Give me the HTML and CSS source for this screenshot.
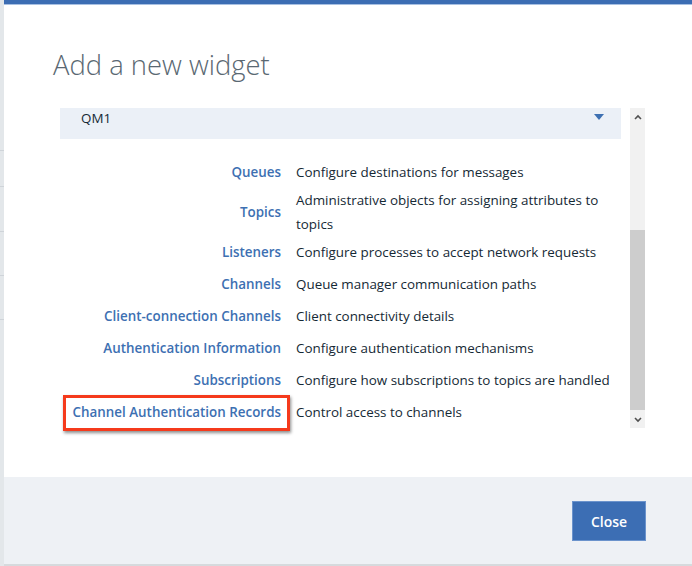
FILE: index.html
```html
<!DOCTYPE html>
<html>
<head>
<meta charset="utf-8">
<link rel="stylesheet" href="styles.css">
</head>
<body>
<div class="page">
  <div class="side">
    <div class="side-line l1"></div>
    <div class="side-line l2"></div>
    <div class="side-line l3"></div>
    <div class="side-line l4"></div>
    <div class="side-line l5"></div>
  </div>
  <div class="dialog">
    <div class="main">
      <h1 class="title">Add a new widget</h1>
      <div class="scroller">
        <div class="content">
          <div class="select">
            <span class="select-value">QM1</span>
            <svg class="caret" width="10" height="6" viewBox="0 0 10 6"><path d="M0 0 L10 0 L5 6 Z" fill="#3d70b2"/></svg>
          </div>
          <div class="rows">
            <div class="row"><div class="label">Queues</div><div class="desc">Configure destinations for messages</div></div>
            <div class="row"><div class="label">Topics</div><div class="desc">Administrative objects for assigning attributes to topics</div></div>
            <div class="row"><div class="label">Listeners</div><div class="desc">Configure processes to accept network requests</div></div>
            <div class="row"><div class="label">Channels</div><div class="desc">Queue manager communication paths</div></div>
            <div class="row"><div class="label">Client-connection Channels</div><div class="desc">Client connectivity details</div></div>
            <div class="row"><div class="label">Authentication Information</div><div class="desc">Configure authentication mechanisms</div></div>
            <div class="row"><div class="label">Subscriptions</div><div class="desc">Configure how subscriptions to topics are handled</div></div>
            <div class="row"><div class="label"><span class="highlight">Channel Authentication Records</span></div><div class="desc">Control access to channels</div></div>
          </div>
        </div>
        <div class="scrollbar">
          <div class="sb-arrow">
            <svg width="8" height="6" viewBox="0 0 8 6"><path d="M1 5 L4 2 L7 5" fill="none" stroke="#505050" stroke-width="1.6"/></svg>
          </div>
          <div class="sb-track">
            <div class="sb-thumb"></div>
          </div>
          <div class="sb-arrow">
            <svg width="8" height="6" viewBox="0 0 8 6"><path d="M1 1 L4 4 L7 1" fill="none" stroke="#505050" stroke-width="1.6"/></svg>
          </div>
        </div>
      </div>
    </div>
    <div class="footer">
      <button class="btn">Close</button>
    </div>
  </div>
</div>
</body>
</html>
```

FILE: styles.css
```css
* { box-sizing: border-box; }
html, body { margin: 0; padding: 0; }
body {
  width: 692px;
  height: 566px;
  overflow: hidden;
  background: #e6e9ec;
  font-family: "Open Sans", "Noto Sans", sans-serif;
}
.page {
  display: flex;
  height: 566px;
}
.side {
  width: 4px;
  flex: none;
  background: #e3e7ea;
  position: relative;
}
.side-line {
  position: absolute;
  left: 0;
  width: 4px;
  height: 1px;
  background: #cfd4d9;
}
.l1 { top: 150px; }
.l2 { top: 186px; }
.l3 { top: 231px; }
.l4 { top: 275px; }
.l5 { top: 319px; }
.dialog {
  flex: 1;
  display: flex;
  flex-direction: column;
  background: #ffffff;
  border-top: 4px solid #3c6db3;
  box-shadow: inset 0 1px 0 #a8c0e2;
  height: 566px;
}
.main {
  height: 473px;
  flex: none;
  padding: 0 0 0 49px;
}
.title {
  margin: 0;
  padding-top: 41px;
  height: 104px;
  font-weight: 300;
  font-size: 27.4px;
  line-height: 40px;
  color: #5a6872;
}
.scroller {
  display: flex;
  gap: 9px;
  padding-left: 7px;
}
.content {
  width: 561px;
}
.select {
  height: 31px;
  background: #ebf0f7;
  display: flex;
  justify-content: space-between;
  padding: 0 17px 0 21px;
}
.select-value {
  line-height: 20px;
  font-size: 13.4px;
  color: #152935;
}
.caret {
  margin-top: 6px;
}
.rows {
  padding-top: 17px;
}
.row {
  display: flex;
  align-items: center;
  min-height: 32px;
  gap: 15px;
  font-size: 13.4px;
  line-height: 24px;
}
.label {
  width: 221px;
  flex: none;
  text-align: right;
  font-weight: 600;
  color: #3d70b2;
  white-space: nowrap;
}
.desc {
  width: 322px;
  color: #152935;
}
.highlight {
  position: relative;
  display: inline-block;
}
.highlight::after {
  content: "";
  position: absolute;
  top: -5px;
  bottom: -7px;
  left: -10px;
  right: -9px;
  border: 3px solid #f53a1c;
  box-shadow: 1px 2px 3px rgba(0, 0, 0, 0.45);
}
.scrollbar {
  width: 15px;
  height: 320px;
  background: #f1f1f1;
  display: flex;
  flex-direction: column;
}
.sb-arrow {
  height: 17px;
  display: flex;
  align-items: center;
  justify-content: center;
}
.sb-track {
  flex: 1;
  padding-top: 105px;
  padding-bottom: 1px;
  display: flex;
  flex-direction: column;
}
.sb-thumb {
  flex: 1;
  background: #cdcdcd;
}
.footer {
  flex: 1;
  background: #eef1f5;
  border-bottom: 2px solid #d6dadd;
  display: flex;
  justify-content: flex-end;
  align-items: flex-start;
  padding: 24px 46px 0 0;
}
.btn {
  width: 74px;
  height: 40px;
  background: #3c6eb4;
  border: 1px solid #6b93cc;
  color: #ffffff;
  font-family: "Open Sans", "Noto Sans", sans-serif;
  font-weight: 600;
  font-size: 14px;
  padding: 0;
}
```
